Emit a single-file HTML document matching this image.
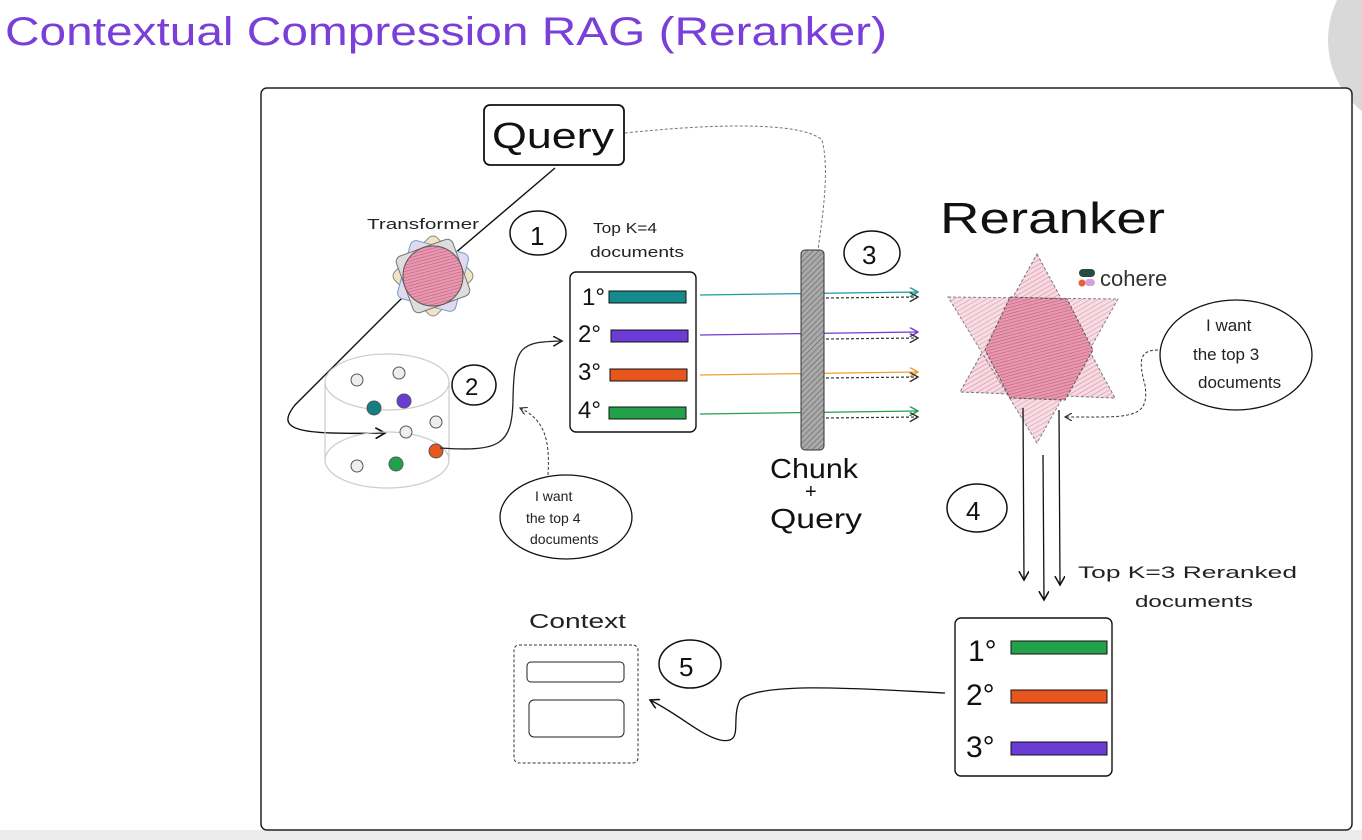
<!DOCTYPE html>
<html><head><meta charset="utf-8"><style>
html,body{margin:0;padding:0;background:#fff;width:1362px;height:840px;overflow:hidden}
svg{display:block}
text{font-family:"Liberation Sans",sans-serif}
</style></head><body>
<svg width="1362" height="840" viewBox="0 0 1362 840" xmlns="http://www.w3.org/2000/svg">
<defs>
<pattern id="hp" width="4" height="4" patternUnits="userSpaceOnUse" patternTransform="rotate(60)"><rect width="4" height="4" fill="#f6dbe3"/><line x1="0" y1="0" x2="0" y2="4" stroke="#df8aa5" stroke-width="1.2"/></pattern>
<pattern id="hp2" width="3" height="3" patternUnits="userSpaceOnUse" patternTransform="rotate(75)"><rect width="3" height="3" fill="#e69ab2"/><line x1="0" y1="0" x2="0" y2="3" stroke="#c9587c" stroke-width="1.2"/></pattern>
<pattern id="gp" width="4" height="4" patternUnits="userSpaceOnUse" patternTransform="rotate(45)"><rect width="4" height="4" fill="#aaa"/><line x1="0" y1="0" x2="0" y2="4" stroke="#666" stroke-width="1.3"/></pattern>
<marker id="ar" markerWidth="8" markerHeight="8" refX="7" refY="4" orient="auto"><path d="M0,0 L7,4 L0,8" fill="none" stroke="context-stroke" stroke-width="1.2"/></marker>
</defs>
<rect width="1362" height="840" fill="#fff"/>
<circle cx="1420" cy="40" r="92" fill="#d9d9d9"/>
<rect x="0" y="830" width="1362" height="10" fill="#ececec"/>
<text x="5" y="45" font-size="40" fill="#7a3fd8" textLength="882" lengthAdjust="spacingAndGlyphs">Contextual Compression RAG (Reranker)</text>
<rect x="261" y="88" width="1091" height="742" rx="6" fill="#fff" stroke="#222" stroke-width="1.5"/>

<rect x="484" y="105" width="140" height="60" rx="6" fill="#fff" stroke="#111" stroke-width="1.8"/>
<text x="492" y="148" font-size="36" fill="#111" textLength="122" lengthAdjust="spacingAndGlyphs">Query</text>
<path d="M625,133 C700,125 800,120 822,140 C830,170 822,220 818,250" fill="none" stroke="#777" stroke-width="1" stroke-dasharray="3,2"/>
<path d="M555,168 L400,300 L295,405 C275,430 295,435 385,433" fill="none" stroke="#111" stroke-width="1.4" marker-end="url(#ar)"/>
<text x="367" y="229" font-size="15" fill="#222" textLength="112" lengthAdjust="spacingAndGlyphs">Transformer</text>
<g transform="translate(433,276)">
<rect x="-30" y="-30" width="60" height="60" rx="6" fill="#f3e3c7" stroke="#888" transform="rotate(45)"/>
<rect x="-30" y="-30" width="60" height="60" rx="6" fill="#e3d9ee" stroke="#6aa0c8" transform="rotate(15)"/>
<rect x="-30" y="-30" width="60" height="60" rx="6" fill="#ddd" stroke="#777" transform="rotate(-20)"/>
<circle r="30" fill="url(#hp2)" stroke="#555"/>
</g>
<ellipse cx="538" cy="233" rx="28" ry="22" fill="#fff" stroke="#111" stroke-width="1.5"/>
<text x="530" y="245" font-size="26" fill="#111">1</text>
<text x="593" y="233" font-size="15" fill="#222" textLength="64" lengthAdjust="spacingAndGlyphs">Top K=4</text>
<text x="590" y="257" font-size="15" fill="#222" textLength="94" lengthAdjust="spacingAndGlyphs">documents</text>
<g fill="none" stroke="#ccc" stroke-width="1.2">
<ellipse cx="387" cy="382" rx="62" ry="28"/>
<ellipse cx="387" cy="460" rx="62" ry="28"/>
<line x1="325" y1="382" x2="325" y2="460"/><line x1="449" y1="382" x2="449" y2="460"/>
</g>
<g stroke="#555" stroke-width="1">
<circle cx="357" cy="380" r="6" fill="#eee"/><circle cx="399" cy="373" r="6" fill="#eee"/>
<circle cx="374" cy="408" r="7" fill="#147f80"/><circle cx="404" cy="401" r="7" fill="#6b3bd6"/>
<circle cx="436" cy="422" r="6" fill="#eee"/><circle cx="406" cy="432" r="6" fill="#eee"/>
<circle cx="436" cy="451" r="7" fill="#e8561f"/><circle cx="396" cy="464" r="7" fill="#23a04a"/>
<circle cx="357" cy="466" r="6" fill="#eee"/>
</g>
<path d="M440,448 C500,452 512,445 513,400 C514,345 520,342 562,341" fill="none" stroke="#222" stroke-width="1.3" marker-end="url(#ar)"/>
<ellipse cx="474" cy="385" rx="22" ry="20" fill="#fff" stroke="#111" stroke-width="1.5"/>
<text x="465" y="395" font-size="24" fill="#111">2</text>
<path d="M548,475 C550,440 545,420 520,408" fill="none" stroke="#333" stroke-width="1" stroke-dasharray="3,2" marker-end="url(#ar)"/>
<ellipse cx="566" cy="517" rx="66" ry="42" fill="#fff" stroke="#111" stroke-width="1.3"/>
<text x="535" y="501" font-size="14" fill="#222">I want</text>
<text x="526" y="523" font-size="14" fill="#222">the top 4</text>
<text x="530" y="544" font-size="14" fill="#222">documents</text>
<rect x="570" y="272" width="126" height="160" rx="6" fill="#fff" stroke="#111" stroke-width="1.4"/>
<g font-size="24" fill="#111"><text x="582" y="305">1°</text><text x="578" y="342">2°</text><text x="578" y="380">3°</text><text x="578" y="418">4°</text></g>
<g stroke="#111" stroke-width="1">
<rect x="609" y="291" width="77" height="12" fill="#148a8c"/>
<rect x="611" y="330" width="77" height="12" fill="#6b3bd6"/>
<rect x="610" y="369" width="77" height="12" fill="#e8561f"/>
<rect x="609" y="407" width="77" height="12" fill="#23a04a"/>
</g>
<g stroke-width="1.2" fill="none">
<path d="M700,295 L918,292" stroke="#1f9aa0" marker-end="url(#ar)"/>
<path d="M700,335 L918,332" stroke="#6b3bd6" marker-end="url(#ar)"/>
<path d="M700,375 L918,372" stroke="#f0a030" marker-end="url(#ar)"/>
<path d="M700,414 L918,411" stroke="#23a04a" marker-end="url(#ar)"/>
</g>
<rect x="801" y="250" width="23" height="200" rx="4" fill="url(#gp)" stroke="#333"/>
<g stroke="#333" stroke-dasharray="3,2" stroke-width="1.2" fill="none">
<path d="M826,298 L918,297" marker-end="url(#ar)"/><path d="M826,339 L918,338" marker-end="url(#ar)"/>
<path d="M826,378 L918,377" marker-end="url(#ar)"/><path d="M826,418 L918,417" marker-end="url(#ar)"/>
</g>
<ellipse cx="872" cy="253" rx="28" ry="22" fill="#fff" stroke="#111" stroke-width="1.5"/>
<text x="862" y="264" font-size="26" fill="#111">3</text>
<text x="770" y="478" font-size="28" fill="#111" textLength="88" lengthAdjust="spacingAndGlyphs">Chunk</text>
<text x="805" y="498" font-size="20" fill="#111">+</text>
<text x="770" y="528" font-size="28" fill="#111" textLength="92" lengthAdjust="spacingAndGlyphs">Query</text>
<text x="940" y="233" font-size="44" fill="#111" textLength="225" lengthAdjust="spacingAndGlyphs">Reranker</text>
<polygon points="1037,254 1115,398 960,392" fill="url(#hp)" stroke="#777" stroke-dasharray="3,2"/>
<polygon points="948,297 1118,299 1037,443" fill="url(#hp)" stroke="#777" stroke-dasharray="3,2" opacity="0.9"/>
<polygon points="1010,297 1067,299 1093,350 1065,400 1010,398 985,350" fill="url(#hp2)" stroke="#555" stroke-dasharray="3,2"/>
<rect x="1079" y="269" width="16" height="8" rx="4" fill="#2a4a40"/><circle cx="1082" cy="283" r="3.5" fill="#e8603a"/><rect x="1085" y="279" width="10" height="7" rx="3.5" fill="#d6a0e0"/>
<text x="1100" y="286" font-size="22" fill="#333">cohere</text>
<ellipse cx="1236" cy="355" rx="76" ry="55" fill="#fff" stroke="#111" stroke-width="1.3"/>
<text x="1206" y="331" font-size="17" fill="#222">I want</text>
<text x="1193" y="360" font-size="17" fill="#222">the top 3</text>
<text x="1198" y="388" font-size="17" fill="#222">documents</text>
<path d="M1158,350 C1140,350 1138,360 1145,385 C1150,420 1130,417 1065,417" fill="none" stroke="#333" stroke-width="1" stroke-dasharray="3,2" marker-end="url(#ar)"/>
<g stroke="#111" stroke-width="1.3" fill="none">
<path d="M1023,408 L1024,580" marker-end="url(#ar)"/>
<path d="M1043,455 L1044,600" marker-end="url(#ar)"/>
<path d="M1059,410 L1060,585" marker-end="url(#ar)"/>
</g>
<ellipse cx="977" cy="508" rx="30" ry="24" fill="#fff" stroke="#111" stroke-width="1.5"/>
<text x="966" y="520" font-size="26" fill="#111">4</text>
<text x="1078" y="578" font-size="17" fill="#222" textLength="219" lengthAdjust="spacingAndGlyphs">Top K=3 Reranked</text>
<text x="1135" y="607" font-size="17" fill="#222" textLength="118" lengthAdjust="spacingAndGlyphs">documents</text>
<rect x="955" y="618" width="157" height="158" rx="6" fill="#fff" stroke="#111" stroke-width="1.4"/>
<g font-size="30" fill="#111"><text x="968" y="661">1°</text><text x="966" y="705">2°</text><text x="966" y="757">3°</text></g>
<g stroke="#111" stroke-width="1">
<rect x="1011" y="641" width="96" height="13" fill="#23a04a"/>
<rect x="1011" y="690" width="96" height="13" fill="#e8561f"/>
<rect x="1011" y="742" width="96" height="13" fill="#6b3bd6"/>
</g>
<path d="M945,693 C880,690 760,680 740,700 C730,720 745,745 720,740 C700,735 680,715 650,700" fill="none" stroke="#111" stroke-width="1.3" marker-end="url(#ar)"/>
<ellipse cx="690" cy="664" rx="31" ry="24" fill="#fff" stroke="#111" stroke-width="1.5"/>
<text x="679" y="676" font-size="26" fill="#111">5</text>
<text x="529" y="628" font-size="20" fill="#222" textLength="97" lengthAdjust="spacingAndGlyphs">Context</text>
<rect x="514" y="645" width="124" height="118" rx="5" fill="#fff" stroke="#333" stroke-dasharray="3,2"/>
<rect x="527" y="662" width="97" height="20" rx="4" fill="#fff" stroke="#222"/>
<rect x="529" y="700" width="95" height="37" rx="5" fill="#fff" stroke="#222"/>
</svg>
</body></html>
